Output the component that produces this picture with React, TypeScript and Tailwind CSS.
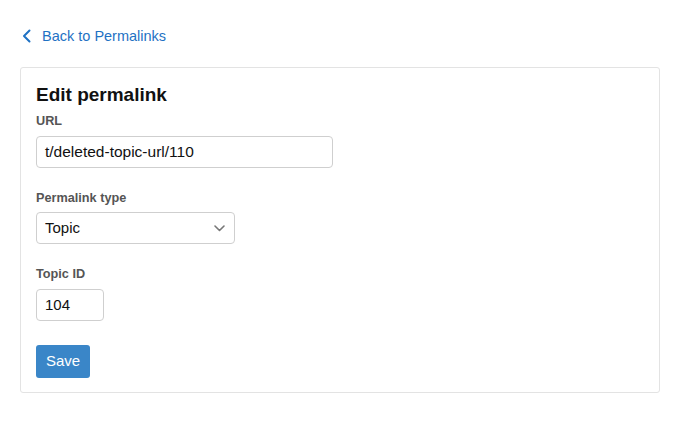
export default function App() {
  return (
    <div className="min-h-screen w-full bg-white font-['Liberation_Sans',Arial,sans-serif] text-[#222]">
      <div className="px-5 pt-[27px]">
        {/* Back link */}
        <a href="#" className="flex items-center gap-[11px] pl-[2px] text-[14.5px] leading-[18px] text-[#1f72c4]">
          <svg width="9" height="14" viewBox="0 0 9 14" fill="none">
            <path d="M7.5 1.5 2 7l5.5 5.5" stroke="currentColor" strokeWidth="2" strokeLinecap="round" strokeLinejoin="round" />
          </svg>
          <span>Back to Permalinks</span>
        </a>

        {/* Card */}
        <div className="mt-[22px] w-[640px] rounded-[3px] border border-[#e3e3e3] px-[15px] pt-[16px] pb-[14px]">
          <h2 className="text-[19px] font-bold leading-[22px] text-[#111]">Edit permalink</h2>

          <div className="mt-[7px] flex flex-col">
            <label className="text-[12.7px] font-bold leading-[16px] text-[#555]">URL</label>
            <div className="mt-[7px] flex h-[32px] w-[297px] items-center rounded-[4px] border border-[#cfcfcf] px-[8px] text-[15.5px] text-[#111]">
              t/deleted-topic-url/110
            </div>
          </div>

          <div className="mt-[22px] flex flex-col">
            <label className="text-[12.7px] font-bold leading-[16px] text-[#555]">Permalink type</label>
            <div className="mt-[6px] flex h-[32px] w-[199px] items-center justify-between rounded-[4px] border border-[#cfcfcf] pl-[8px] pr-[9px] text-[15px] text-[#111]">
              <span>Topic</span>
              <svg width="11" height="7" viewBox="0 0 11 7" fill="none">
                <path d="M1 1l4.5 4.5L10 1" stroke="#777" strokeWidth="1.6" strokeLinecap="round" strokeLinejoin="round" />
              </svg>
            </div>
          </div>

          <div className="mt-[22px] flex flex-col">
            <label className="text-[12.7px] font-bold leading-[16px] text-[#555]">Topic ID</label>
            <div className="mt-[7px] flex h-[32px] w-[68px] items-center rounded-[4px] border border-[#cfcfcf] px-[8px] text-[15px] text-[#111]">
              104
            </div>
          </div>

          <button className="mt-[24px] flex h-[33px] w-[54px] items-center justify-center rounded-[3px] bg-[#3a86c8] text-[15px] text-white">
            Save
          </button>
        </div>
      </div>
    </div>
  );
}
